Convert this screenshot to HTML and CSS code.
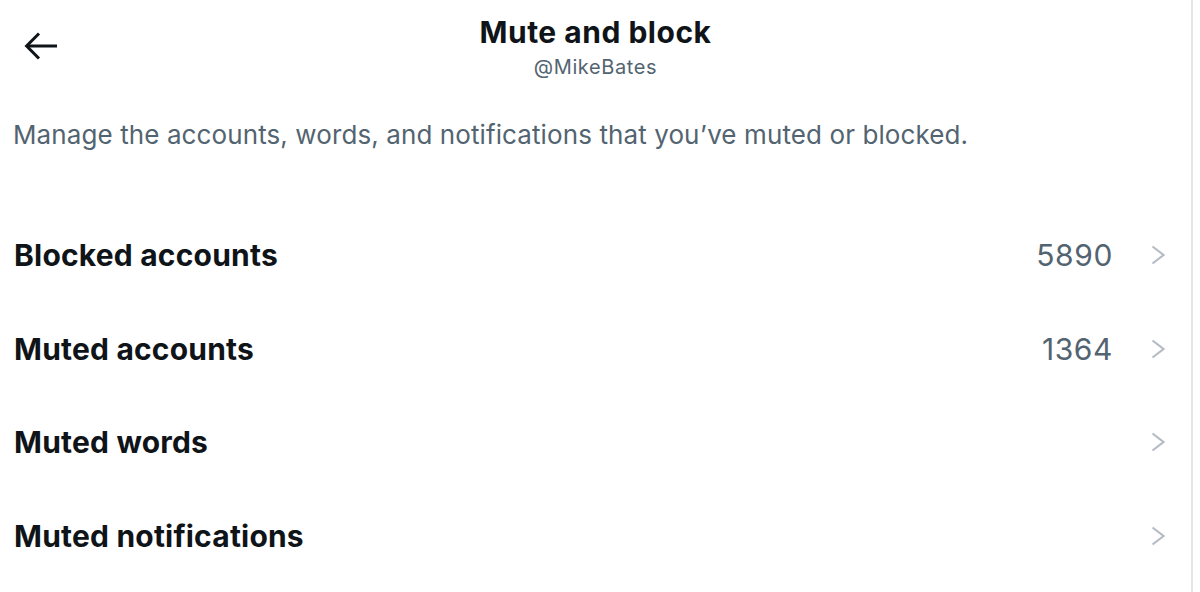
FILE: index.html
```html
<!DOCTYPE html>
<html lang="en">
<head>
<meta charset="utf-8">
<title>Mute and block</title>
<link rel="stylesheet" href="styles.css">
</head>
<body>
<div class="page">
  <header class="header">
    <button class="back" aria-label="Back">
      <svg width="34" height="28" viewBox="0 0 34 28" fill="none" stroke="#0f1419" stroke-width="3" stroke-linecap="butt" stroke-linejoin="miter">
        <path d="M3 14 H33"/>
        <path d="M15 1.5 L2.6 14 L15 26.5"/>
      </svg>
    </button>
    <div class="titles">
      <h1 class="title">Mute and block</h1>
      <div class="handle">@MikeBates</div>
    </div>
  </header>
  <p class="desc">Manage the accounts, words, and notifications that you’ve muted or blocked.</p>
  <ul class="list">
    <li class="row">
      <span class="label">Blocked accounts</span>
      <span class="count">5890</span>
      <svg class="chev" width="14" height="20" viewBox="0 0 14 20" fill="none" stroke="#b5bcc3" stroke-width="2.2"><path d="M1.5 1.5 L12.5 10 L1.5 18.5"/></svg>
    </li>
    <li class="row">
      <span class="label">Muted accounts</span>
      <span class="count">1364</span>
      <svg class="chev" width="14" height="20" viewBox="0 0 14 20" fill="none" stroke="#b5bcc3" stroke-width="2.2"><path d="M1.5 1.5 L12.5 10 L1.5 18.5"/></svg>
    </li>
    <li class="row">
      <span class="label">Muted words</span>
      <svg class="chev" width="14" height="20" viewBox="0 0 14 20" fill="none" stroke="#b5bcc3" stroke-width="2.2"><path d="M1.5 1.5 L12.5 10 L1.5 18.5"/></svg>
    </li>
    <li class="row">
      <span class="label">Muted notifications</span>
      <svg class="chev" width="14" height="20" viewBox="0 0 14 20" fill="none" stroke="#b5bcc3" stroke-width="2.2"><path d="M1.5 1.5 L12.5 10 L1.5 18.5"/></svg>
    </li>
  </ul>
</div>
</body>
</html>
```

FILE: styles.css
```css
* { box-sizing: border-box; }
html, body {
  margin: 0;
  padding: 0;
  background: #ffffff;
}
body {
  font-family: Inter, "Noto Sans", "Liberation Sans", sans-serif;
  color: #0f1419;
}
.page {
  width: 1193px;
  height: 592px;
  border-right: 2px solid #e6e6e6;
  overflow: hidden;
}
.header {
  display: grid;
  grid-template-columns: 1fr auto 1fr;
  align-items: start;
  padding-top: 14px;
}
.back {
  grid-column: 1;
  grid-row: 1;
  justify-self: start;
  margin: 18px 0 0 24px;
  padding: 0;
  border: 0;
  background: none;
  width: 34px;
  height: 28px;
  display: block;
}
.back svg { display: block; }
.titles {
  grid-column: 2;
  grid-row: 1;
  text-align: center;
}
.title {
  margin: 0;
  font-size: 30px;
  line-height: 36px;
  font-weight: 700;
  letter-spacing: 0.5px;
}
.handle {
  font-size: 20px;
  line-height: 24px;
  color: #536471;
  margin-top: 5px;
  letter-spacing: 0.6px;
}
.desc {
  margin: 40px 0 0 13px;
  font-size: 26px;
  line-height: 32px;
  color: #536471;
  letter-spacing: 0.1px;
}
.list {
  list-style: none;
  margin: 57px 0 0 0;
  padding: 0;
}
.row {
  display: flex;
  align-items: center;
  height: 93.8px;
  padding: 0 26px 0 14px;
}
.label {
  flex: 1;
  font-size: 30px;
  font-weight: 700;
  letter-spacing: 0.2px;
}
.count {
  font-size: 30px;
  color: #536471;
  margin-right: 38px;
  letter-spacing: 0.6px;
}
.chev { display: block; }
```
